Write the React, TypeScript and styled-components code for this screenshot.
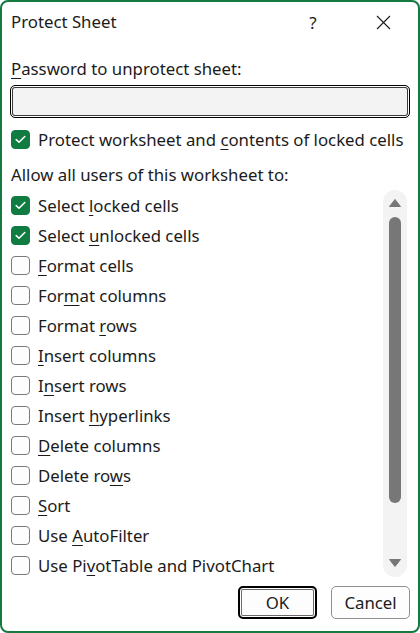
import * as React from "react";
import styled, { createGlobalStyle } from "styled-components";

const GlobalStyle = createGlobalStyle`
  html, body {
    margin: 0;
    padding: 0;
    background: #ffffff;
  }
  body {
    font-family: "Noto Sans", "Open Sans", sans-serif;
    color: #1b1b1b;
  }
`;

const Window = styled.div`
  display: flex;
  flex-direction: column;
  box-sizing: border-box;
  width: 420px;
  height: 633px;
  border: 2px solid #147a40;
  border-radius: 8px;
  background: #ffffff;
  overflow: hidden;
`;

const TitleBar = styled.div`
  display: flex;
  align-items: center;
  height: 40px;
  padding-left: 9px;
`;

const Title = styled.div`
  flex: 1;
  font-size: 16.8px;
  line-height: 20px;
`;

const TitleButton = styled.div`
  display: flex;
  align-items: center;
  justify-content: center;
  width: 70px;
  height: 40px;
  font-size: 17px;
  color: #1b1b1b;
`;

const Body = styled.div`
  display: flex;
  flex-direction: column;
  flex: 1;
  padding: 0 8px 12px;
`;

const Label = styled.div<{ $top: number }>`
  margin-top: ${p => p.$top}px;
  padding-left: 1px;
  font-size: 16.8px;
  line-height: 20px;
`;

const Key = styled.span`
  text-decoration: underline;
  text-decoration-thickness: 1px;
  text-underline-offset: 3px;
`;

const PasswordInput = styled.div`
  box-sizing: border-box;
  margin-top: 6px;
  height: 33px;
  border: 1.5px solid #000000;
  border-radius: 5px;
  background: #f3f3f3;
  box-shadow: inset 0 0 0 1px #ffffff, inset 0 0 0 2px #3a3a3a;
`;

const Row = styled.div<{ $top?: number }>`
  display: flex;
  align-items: center;
  gap: 8px;
  height: 30px;
  margin-top: ${p => p.$top ?? 0}px;
  padding-left: 1px;
  font-size: 16.8px;
  white-space: nowrap;
`;

const Box = styled.div<{ $checked: boolean }>`
  display: flex;
  align-items: center;
  justify-content: center;
  box-sizing: border-box;
  flex: none;
  width: 19px;
  height: 19px;
  border-radius: 4px;
  border: 1px solid ${p => (p.$checked ? "#107c41" : "#7a7a7a")};
  background: ${p => (p.$checked ? "#107c41" : "#fdfdfd")};
`;

const ListArea = styled.div`
  display: flex;
  margin-top: 5px;
`;

const Items = styled.div`
  flex: 1;
  display: flex;
  flex-direction: column;
`;

const ScrollTrack = styled.div`
  display: flex;
  flex-direction: column;
  align-items: center;
  width: 24px;
  height: 387px;
  margin-right: 3px;
  border-radius: 12px;
  background: #f3f3f3;
`;

const Thumb = styled.div`
  width: 12px;
  height: 286px;
  margin-top: 10px;
  border-radius: 6px;
  background: #777777;
`;

const Spacer = styled.div`
  flex: 1;
`;

const Footer = styled.div`
  display: flex;
  justify-content: flex-end;
  gap: 14px;
  margin-top: 6px;
`;

const Button = styled.div<{ $focused?: boolean }>`
  display: flex;
  align-items: center;
  justify-content: center;
  box-sizing: border-box;
  width: 79px;
  height: 33px;
  border-radius: 5px;
  background: #fdfdfd;
  font-size: 16.8px;
  border: ${p => (p.$focused ? "2px solid #000000" : "1px solid #8f8f8f")};
  box-shadow: ${p => (p.$focused ? "inset 0 0 0 1px #ffffff, inset 0 0 0 2px #6a6a6a" : "none")};
`;

const Check = () => (
  <svg width="11" height="9" viewBox="0 0 11 9">
    <path d="M1.2 4.6 L4 7.3 L9.8 1.5" fill="none" stroke="#ffffff" strokeWidth="1.5" strokeLinecap="round" strokeLinejoin="round" />
  </svg>
);

const CloseIcon = () => (
  <svg width="15" height="15" viewBox="0 0 15 15">
    <path d="M1 1 L14 14 M14 1 L1 14" stroke="#1b1b1b" strokeWidth="1.1" />
  </svg>
);

const Arrow = (props: { down?: boolean; top?: number; bottom?: number }) => (
  <svg
    width="12"
    height="8"
    viewBox="0 0 12 8"
    style={{ marginTop: props.top ?? 0, marginBottom: props.bottom ?? 0 }}
  >
    <path
      d={props.down ? "M0.5 0.5 H11.5 L6 7.5 Z" : "M6 0.5 L11.5 7.5 H0.5 Z"}
      fill="#777777"
      stroke="#777777"
      strokeLinejoin="round"
    />
  </svg>
);

// label text split into [before, key, after]
const options: { parts: [string, string, string]; checked: boolean }[] = [
  { parts: ["Select ", "l", "ocked cells"], checked: true },
  { parts: ["Select ", "u", "nlocked cells"], checked: true },
  { parts: ["", "F", "ormat cells"], checked: false },
  { parts: ["For", "m", "at columns"], checked: false },
  { parts: ["Format ", "r", "ows"], checked: false },
  { parts: ["", "I", "nsert columns"], checked: false },
  { parts: ["I", "n", "sert rows"], checked: false },
  { parts: ["Insert ", "h", "yperlinks"], checked: false },
  { parts: ["", "D", "elete columns"], checked: false },
  { parts: ["Delete ro", "w", "s"], checked: false },
  { parts: ["", "S", "ort"], checked: false },
  { parts: ["Use ", "A", "utoFilter"], checked: false },
  { parts: ["Use Pi", "v", "otTable and PivotChart"], checked: false },
];

export default function App() {
  return (
    <>
      <GlobalStyle />
      <Window>
        <TitleBar>
          <Title>Protect Sheet</Title>
          <TitleButton>?</TitleButton>
          <TitleButton>
            <CloseIcon />
          </TitleButton>
        </TitleBar>
        <Body>
          <Label $top={17}>
            <Key>P</Key>assword to unprotect sheet:
          </Label>
          <PasswordInput />
          <Row $top={6}>
            <Box $checked>
              <Check />
            </Box>
            <span>
              Protect worksheet and <Key>c</Key>ontents of locked cells
            </span>
          </Row>
          <Label $top={11}>Allow all users of this worksheet to:</Label>
          <ListArea>
            <Items>
              {options.map(o => (
                <Row key={o.parts.join("")}>
                  <Box $checked={o.checked}>{o.checked && <Check />}</Box>
                  <span>
                    {o.parts[0]}
                    <Key>{o.parts[1]}</Key>
                    {o.parts[2]}
                  </span>
                </Row>
              ))}
            </Items>
            <ScrollTrack>
              <Arrow top={9} />
              <Thumb />
              <Spacer />
              <Arrow down bottom={10} />
            </ScrollTrack>
          </ListArea>
          <Footer>
            <Button $focused>OK</Button>
            <Button>Cancel</Button>
          </Footer>
        </Body>
      </Window>
    </>
  );
}
